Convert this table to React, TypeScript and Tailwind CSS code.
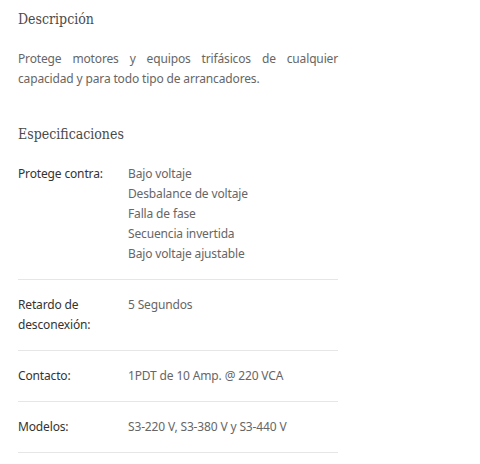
import React from "react";

const specs: { label: string; values: string[] }[] = [
  {
    label: "Protege contra:",
    values: [
      "Bajo voltaje",
      "Desbalance de voltaje",
      "Falla de fase",
      "Secuencia invertida",
      "Bajo voltaje ajustable",
    ],
  },
  { label: "Retardo de desconexión:", values: ["5 Segundos"] },
  { label: "Contacto:", values: ["1PDT de 10 Amp. @ 220 VCA"] },
  { label: "Modelos:", values: ["S3-220 V, S3-380 V y S3-440 V"] },
];

const headingFont = { fontFamily: '"DejaVu Serif Condensed", "DejaVu Serif", serif' };
const bodyFont = { fontFamily: '"Noto Sans", "Liberation Sans", sans-serif' };

export default function App() {
  return (
    <div className="min-h-[464px] bg-white">
      <div className="w-[356px] px-[18px] pt-[9px]">
        <h3 className="text-[14px] leading-5 font-normal text-[#4a4a4a]" style={headingFont}>
          Descripción
        </h3>
        <p
          className="mt-5 text-[12px] leading-5 tracking-[-0.15px] text-[#666] text-justify"
          style={bodyFont}
        >
          Protege motores y equipos trifásicos de cualquier capacidad y para todo tipo de
          arrancadores.
        </p>

        <h3
          className="mt-[35px] text-[14px] leading-5 font-normal text-[#4a4a4a]"
          style={headingFont}
        >
          Especificaciones
        </h3>

        <div className="mt-[5px]" style={bodyFont}>
          {specs.map((row) => (
            <div
              key={row.label}
              className="flex py-[15px] border-b border-[#e6e6e6] text-[12px] leading-5 tracking-[-0.15px]"
            >
              <div className="w-[110px] shrink-0 pr-4 text-[#333]">{row.label}</div>
              <div className="flex flex-col text-[#666]">
                {row.values.map((v) => (
                  <span key={v}>{v}</span>
                ))}
              </div>
            </div>
          ))}
        </div>
      </div>
    </div>
  );
}
